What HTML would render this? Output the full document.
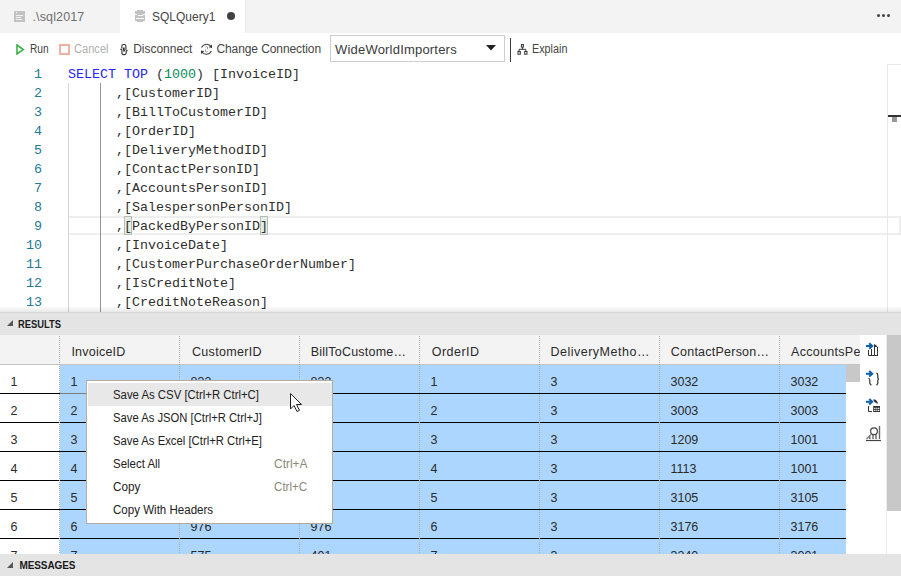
<!DOCTYPE html>
<html><head><meta charset="utf-8"><style>
*{box-sizing:border-box;margin:0;padding:0}
html,body{width:901px;height:579px;overflow:hidden;background:#fff;font-family:"Liberation Sans",sans-serif;color:#333}
.a{position:absolute;white-space:pre}
#tabs{position:absolute;left:0;top:0;width:901px;height:33px;background:#f3f3f3}
#tab2{position:absolute;left:120px;top:0;width:125px;height:33px;background:#fff}
.tt{position:absolute;font-size:12.5px;line-height:16px;white-space:pre}
.tb{position:absolute;font-size:12px;line-height:16px;color:#444;white-space:pre}
#ddl{position:absolute;left:330px;top:35px;width:175px;height:27px;border:1px solid #cecece;background:#fff}
#ed{position:absolute;left:0;top:64px;width:901px;height:248px;overflow:hidden;background:#fff}
.ln{position:absolute;left:0;width:42px;text-align:right;font-family:"Liberation Mono",monospace;font-size:13.333px;line-height:19px;color:#237893}
.cd{position:absolute;left:68px;font-family:"Liberation Mono",monospace;font-size:13.333px;line-height:19px;color:#2e2e2e;white-space:pre}
.kw{color:#2424ff}.nu{color:#09885a}
#res{position:absolute;left:0;top:312px;width:901px;height:23px;background:#e4e4e4;border-top:1px solid #d6d6d6}
.ph{position:absolute;font-weight:bold;font-size:10px;line-height:12px;color:#1a1a1a;white-space:pre}
#grid{position:absolute;left:0;top:335px;width:886px;height:219px;overflow:hidden;background:#fff}
.gh{position:absolute;left:0;top:0;width:860px;height:30px;background:#f3f3f3;border-bottom:1px solid #c5c5c5}
.c{position:absolute;font-size:12.5px;line-height:16px;color:#2a2a2a;white-space:pre}
.row{position:absolute;left:0;width:846px;height:29px;border-bottom:1px solid #000}
.sel{position:absolute;left:60px;width:786px;background:#add6ff}
.vl{position:absolute;top:1px;width:1px;border-left:1px dotted #ababab}
#menu{position:absolute;left:86px;top:380px;width:247px;height:144px;background:#fff;border:1px solid #b3aca6}
.mi{position:absolute;font-size:12.3px;line-height:14px;color:#222;white-space:pre}
.ms{position:absolute;font-size:12.3px;line-height:14px;color:#8a8a78;white-space:pre}
#msg{position:absolute;left:0;top:554px;width:901px;height:22px;background:#e4e4e4}
</style></head><body>
<div id="tabs">
<svg class="a" style="left:14px;top:11px" width="11" height="11" viewBox="0 0 11 11"><rect x="0" y="0" width="11" height="11" fill="#c2c2c2"/><rect x="2" y="1" width="1.2" height="1.2" fill="#f3f3f3"/><rect x="2" y="4" width="7" height="1" fill="#f3f3f3"/><rect x="2" y="6" width="5" height="1" fill="#f3f3f3"/><rect x="2" y="8" width="6" height="1" fill="#f3f3f3"/></svg>
<div id="t1" class="tt" style="left:32.40px;top:9px;letter-spacing:0.150px;color:#6f6f6f">.\sql2017</div>
<div id="tab2">
<svg class="a" style="left:15px;top:10px" width="10" height="12" viewBox="0 0 10 12"><g fill="#c2c2c2"><rect x="2" y="0" width="6" height="1"/><rect x="0" y="1" width="10" height="3"/><rect x="2" y="4" width="6" height="1"/><rect x="0" y="5" width="10" height="6"/><rect x="2" y="11" width="6" height="1"/></g><rect x="3" y="5" width="5" height="1" fill="#fff"/><rect x="1" y="8" width="8" height="1" fill="#fff"/></svg>
<div id="t2" class="tt" style="left:32.40px;top:9px;letter-spacing:0.000px;color:#444;transform:scaleX(0.9593);transform-origin:0 0;">SQLQuery1</div>
<div class="a" style="left:107px;top:12px;width:8px;height:8px;border-radius:50%;background:#424242"></div>
</div>
<div class="a" style="left:245px;top:0;width:1px;height:33px;background:#ebebeb"></div>
<svg class="a" style="left:876px;top:13px" width="15" height="5" viewBox="0 0 15 5"><circle cx="2.5" cy="2.5" r="1.5" fill="#424242"/><circle cx="7.5" cy="2.5" r="1.5" fill="#424242"/><circle cx="12.5" cy="2.5" r="1.5" fill="#424242"/></svg>
</div>
<svg class="a" style="left:16px;top:44px" width="9" height="11" viewBox="0 0 9 11"><path d="M1 1 L7.3 5.5 L1 10 Z" fill="none" stroke="#3bb44a" stroke-width="1.6"/></svg>
<div id="run" class="tb" style="left:29.60px;top:41px;letter-spacing:0.000px;;transform:scaleX(0.8433);transform-origin:0 0;">Run</div>
<div class="a" style="left:59px;top:44px;width:11px;height:11px;border:2px solid #efb1a2"></div>
<div id="cancel" class="tb" style="left:74.40px;top:41px;letter-spacing:0.000px;color:#b0b0b0;transform:scaleX(0.9240);transform-origin:0 0;">Cancel</div>
<svg class="a" style="left:118px;top:42px" width="12" height="15" viewBox="0 0 12 15"><g fill="none" stroke="#333" stroke-width="1.1"><path d="M3.8 6.5 V4.3 Q3.8 2.5 5.5 2.5 H6.3 Q7.9 2.5 7.9 4.3 V8"/><path d="M8.2 8.5 V10.8 Q8.2 12.6 6.5 12.6 H5.6 Q3.9 12.6 3.9 10.8 V7.5"/><path d="M5.6 5.5 L6.2 9.5" stroke-width="1.7"/><path d="M2.3 7.4 H3.8 M8.2 8.6 H9.6"/></g></svg>
<div id="disc" class="tb" style="left:133.20px;top:41px;letter-spacing:-0.022px;">Disconnect</div>
<svg class="a" style="left:199px;top:41px" width="15" height="16" viewBox="0 0 15 16"><g fill="none" stroke="#444" stroke-width="1.1"><path d="M2.5 6.5 Q4.5 3 8 3.2 Q10.5 3.5 12 5.5"/><path d="M12.5 10 Q10.5 13.5 7 13.3 Q4.5 13 3 11"/></g><path d="M13 3.5 L13 7 L9.8 6.2 Z" fill="#333"/><path d="M2 13 L2 9.5 L5.2 10.3 Z" fill="#333"/><g fill="none" stroke="#888" stroke-width="0.9"><path d="M6.5 6 Q7.5 5 8.5 6 V8 M6.5 8.5 V10.5 Q7.5 11.5 8.5 10.5"/></g></svg>
<div id="chg" class="tb" style="left:216.40px;top:41px;letter-spacing:-0.087px;">Change Connection</div>
<div id="ddl"></div>
<div id="wwi" class="tb" style="left:335.00px;top:42px;letter-spacing:0.200px;color:#3a3a3a;font-size:13px">WideWorldImporters</div>
<svg class="a" style="left:486px;top:45px" width="10" height="6" viewBox="0 0 10 6"><path d="M0 0 H10 L5 5.5 Z" fill="#222"/></svg>
<div class="a" style="left:510px;top:38px;width:1px;height:24px;background:#3c3c3c"></div>
<svg class="a" style="left:514px;top:41px" width="16" height="16" viewBox="0 0 16 16"><g fill="none" stroke="#333" stroke-width="1"><rect x="7.4" y="3.5" width="2" height="2.6"/><rect x="4" y="10.5" width="2.3" height="2.7"/><rect x="10.7" y="10.5" width="2.3" height="2.7"/><path d="M8.4 6.1 V8.3 M5.1 10.5 V8.3 H11.8 V10.5"/></g></svg>
<div id="explain" class="tb" style="left:532.40px;top:41px;letter-spacing:0.000px;;transform:scaleX(0.8989);transform-origin:0 0;">Explain</div>
<div id="ed">
<div class="a" style="left:68px;top:152px;width:833px;height:19px;border:2px solid #eeeeee;border-left:0"></div>
<div class="a" style="left:68px;top:19px;width:1px;height:229px;background:#d3d3d3"></div>
<div class="a" style="left:100px;top:19px;width:1px;height:229px;background:#939393"></div>
<div class="a" style="left:124px;top:152px;width:8px;height:19px;background:#e3efe3;border:1px solid #b9b9b9"></div>
<div class="a" style="left:260px;top:152px;width:8px;height:19px;background:#e3efe3;border:1px solid #b9b9b9"></div>
<div class="ln" style="top:1px">1</div><div class="cd" style="top:1px"><span class="kw">SELECT</span> <span class="kw">TOP</span> (<span class="nu">1000</span>) [InvoiceID]</div>
<div class="ln" style="top:20px">2</div><div class="cd" style="top:20px">      ,[CustomerID]</div>
<div class="ln" style="top:39px">3</div><div class="cd" style="top:39px">      ,[BillToCustomerID]</div>
<div class="ln" style="top:58px">4</div><div class="cd" style="top:58px">      ,[OrderID]</div>
<div class="ln" style="top:77px">5</div><div class="cd" style="top:77px">      ,[DeliveryMethodID]</div>
<div class="ln" style="top:96px">6</div><div class="cd" style="top:96px">      ,[ContactPersonID]</div>
<div class="ln" style="top:115px">7</div><div class="cd" style="top:115px">      ,[AccountsPersonID]</div>
<div class="ln" style="top:134px">8</div><div class="cd" style="top:134px">      ,[SalespersonPersonID]</div>
<div class="ln" style="top:153px">9</div><div class="cd" style="top:153px">      ,[PackedByPersonID]</div>
<div class="ln" style="top:172px">10</div><div class="cd" style="top:172px">      ,[InvoiceDate]</div>
<div class="ln" style="top:191px">11</div><div class="cd" style="top:191px">      ,[CustomerPurchaseOrderNumber]</div>
<div class="ln" style="top:210px">12</div><div class="cd" style="top:210px">      ,[IsCreditNote]</div>
<div class="ln" style="top:229px">13</div><div class="cd" style="top:229px">      ,[CreditNoteReason]</div>
<div class="a" style="left:887px;top:0;width:14px;height:248px;border-left:1px solid #e8e8e8;border-top:1px solid #e8e8e8"></div>
<div class="a" style="left:888px;top:51px;width:13px;height:2px;background:#333"></div>
<div class="a" style="left:892px;top:53px;width:5px;height:5px;background:#999"></div>
<div class="a" style="left:0;top:242px;width:901px;height:6px;background:linear-gradient(rgba(0,0,0,0),rgba(0,0,0,0.09))"></div>
</div>
<div id="res"><svg class="a" style="left:7px;top:7px" width="6" height="6" viewBox="0 0 6 6"><path d="M6 0 V6 H0 Z" fill="#555"/></svg><div id="results" class="ph" style="left:18.40px;top:6px;letter-spacing:0.000px;;transform:scaleX(0.9371);transform-origin:0 0;">RESULTS</div></div>
<div id="grid"><div class="gh">
<div id="h0" class="c" style="left:71.40px;top:9px;letter-spacing:0.225px;">InvoiceID</div>
<div id="h1" class="c" style="left:192.00px;top:9px;letter-spacing:0.311px;">CustomerID</div>
<div id="h2" class="c" style="left:310.80px;top:9px;letter-spacing:0.215px;">BillToCustome…</div>
<div id="h3" class="c" style="left:431.80px;top:9px;letter-spacing:0.467px;">OrderID</div>
<div id="h4" class="c" style="left:550.40px;top:9px;letter-spacing:0.508px;">DeliveryMetho…</div>
<div id="h5" class="c" style="left:670.80px;top:9px;letter-spacing:0.231px;">ContactPerson…</div>
<div id="h6" class="c" style="left:791.00px;top:9px;letter-spacing:0.300px;">AccountsPe</div>
</div>
<div class="row" style="top:30px"><div class="sel" style="top:0;height:28px"></div>
<div class="c" style="left:10.5px;top:9px;letter-spacing:0px">1</div>
<div class="c" style="left:70.5px;top:9px;letter-spacing:0px">1</div>
<div class="c" style="left:190.5px;top:9px;letter-spacing:0px">832</div>
<div class="c" style="left:310.5px;top:9px;letter-spacing:0px">832</div>
<div class="c" style="left:430.5px;top:9px;letter-spacing:0px">1</div>
<div class="c" style="left:550.5px;top:9px;letter-spacing:0px">3</div>
<div class="c" style="left:670.5px;top:9px;letter-spacing:0px">3032</div>
<div class="c" style="left:790.5px;top:9px;letter-spacing:0px">3032</div>
</div>
<div class="row" style="top:59px"><div class="sel" style="top:0;height:28px"></div>
<div class="c" style="left:10.5px;top:9px;letter-spacing:0px">2</div>
<div class="c" style="left:70.5px;top:9px;letter-spacing:0px">2</div>
<div class="c" style="left:190.5px;top:9px;letter-spacing:0px">832</div>
<div class="c" style="left:310.5px;top:9px;letter-spacing:0px">832</div>
<div class="c" style="left:430.5px;top:9px;letter-spacing:0px">2</div>
<div class="c" style="left:550.5px;top:9px;letter-spacing:0px">3</div>
<div class="c" style="left:670.5px;top:9px;letter-spacing:0px">3003</div>
<div class="c" style="left:790.5px;top:9px;letter-spacing:0px">3003</div>
</div>
<div class="row" style="top:88px"><div class="sel" style="top:0;height:28px"></div>
<div class="c" style="left:10.5px;top:9px;letter-spacing:0px">3</div>
<div class="c" style="left:70.5px;top:9px;letter-spacing:0px">3</div>
<div class="c" style="left:190.5px;top:9px;letter-spacing:0px">803</div>
<div class="c" style="left:310.5px;top:9px;letter-spacing:0px">803</div>
<div class="c" style="left:430.5px;top:9px;letter-spacing:0px">3</div>
<div class="c" style="left:550.5px;top:9px;letter-spacing:0px">3</div>
<div class="c" style="left:670.5px;top:9px;letter-spacing:0px">1209</div>
<div class="c" style="left:790.5px;top:9px;letter-spacing:0px">1001</div>
</div>
<div class="row" style="top:117px"><div class="sel" style="top:0;height:28px"></div>
<div class="c" style="left:10.5px;top:9px;letter-spacing:0px">4</div>
<div class="c" style="left:70.5px;top:9px;letter-spacing:0px">4</div>
<div class="c" style="left:190.5px;top:9px;letter-spacing:0px">803</div>
<div class="c" style="left:310.5px;top:9px;letter-spacing:0px">803</div>
<div class="c" style="left:430.5px;top:9px;letter-spacing:0px">4</div>
<div class="c" style="left:550.5px;top:9px;letter-spacing:0px">3</div>
<div class="c" style="left:670.5px;top:9px;letter-spacing:0px">1113</div>
<div class="c" style="left:790.5px;top:9px;letter-spacing:0px">1001</div>
</div>
<div class="row" style="top:146px"><div class="sel" style="top:0;height:28px"></div>
<div class="c" style="left:10.5px;top:9px;letter-spacing:0px">5</div>
<div class="c" style="left:70.5px;top:9px;letter-spacing:0px">5</div>
<div class="c" style="left:190.5px;top:9px;letter-spacing:0px">105</div>
<div class="c" style="left:310.5px;top:9px;letter-spacing:0px">105</div>
<div class="c" style="left:430.5px;top:9px;letter-spacing:0px">5</div>
<div class="c" style="left:550.5px;top:9px;letter-spacing:0px">3</div>
<div class="c" style="left:670.5px;top:9px;letter-spacing:0px">3105</div>
<div class="c" style="left:790.5px;top:9px;letter-spacing:0px">3105</div>
</div>
<div class="row" style="top:175px"><div class="sel" style="top:0;height:28px"></div>
<div class="c" style="left:10.5px;top:9px;letter-spacing:0px">6</div>
<div class="c" style="left:70.5px;top:9px;letter-spacing:0px">6</div>
<div class="c" style="left:190.5px;top:9px;letter-spacing:0px">976</div>
<div class="c" style="left:310.5px;top:9px;letter-spacing:0px">976</div>
<div class="c" style="left:430.5px;top:9px;letter-spacing:0px">6</div>
<div class="c" style="left:550.5px;top:9px;letter-spacing:0px">3</div>
<div class="c" style="left:670.5px;top:9px;letter-spacing:0px">3176</div>
<div class="c" style="left:790.5px;top:9px;letter-spacing:0px">3176</div>
</div>
<div class="row" style="top:204px"><div class="sel" style="top:0;height:28px"></div>
<div class="c" style="left:10.5px;top:9px;letter-spacing:0px">7</div>
<div class="c" style="left:70.5px;top:9px;letter-spacing:0px">7</div>
<div class="c" style="left:190.5px;top:9px;letter-spacing:0px">575</div>
<div class="c" style="left:310.5px;top:9px;letter-spacing:0px">401</div>
<div class="c" style="left:430.5px;top:9px;letter-spacing:0px">7</div>
<div class="c" style="left:550.5px;top:9px;letter-spacing:0px">3</div>
<div class="c" style="left:670.5px;top:9px;letter-spacing:0px">3240</div>
<div class="c" style="left:790.5px;top:9px;letter-spacing:0px">3001</div>
</div>
<div class="vl" style="left:59px;height:219px"></div>
<div class="vl" style="left:179px;height:219px"></div>
<div class="vl" style="left:299px;height:219px"></div>
<div class="vl" style="left:419px;height:219px"></div>
<div class="vl" style="left:539px;height:219px"></div>
<div class="vl" style="left:659px;height:219px"></div>
<div class="vl" style="left:779px;height:219px"></div>
<div class="a" style="left:60px;top:58px;width:30px;height:1px;background:#7c7c7c"></div>
<div class="a" style="left:846px;top:30px;width:14px;height:189px;background:#fff"></div>
<div class="a" style="left:846px;top:30px;width:14px;height:17px;background:#c8c8c8"></div>
</div>
<div id="msg"><svg class="a" style="left:7px;top:8px" width="6" height="6" viewBox="0 0 6 6"><path d="M6 0 V6 H0 Z" fill="#555"/></svg><div id="messages" class="ph" style="left:19.40px;top:6px;letter-spacing:-0.086px;">MESSAGES</div></div>
<div class="a" style="left:860px;top:335px;width:26px;height:219px;background:#fff"></div>
<div class="a" style="left:886px;top:335px;width:1px;height:219px;background:#ebebf0"></div>
<div class="a" style="left:887px;top:335px;width:14px;height:176px;background:#c8c8c8"></div>
<svg class="a" style="left:865px;top:342px" width="17" height="100" viewBox="0 0 17 100">
  <g fill="none" stroke="#0b5fb0" stroke-width="2" stroke-linejoin="miter"><path d="M1 4 H7"/><path d="M4.2 1.2 L7.2 4 L4.2 6.8"/><path d="M1 31.8 H7"/><path d="M4.2 29 L7.2 31.8 L4.2 34.6"/><path d="M1 59.8 H7"/><path d="M4.2 57 L7.2 59.8 L4.2 62.6"/></g>
  <g fill="none" stroke="#333" stroke-width="1"><path d="M3.5 8 V13.5 H13 M6.5 13.5 V7 M9.5 13.5 V2.5 L12.5 5 V13.5"/></g><path d="M9.5 2.5 L12.5 5 H9.5 Z" fill="#333"/>
  <path d="M3.3 36.5 Q4.8 36.5 4.8 38.2 V40.6 Q4.8 42.8 6.5 42.8" fill="none" stroke="#333" stroke-width="1.2"/>
  <path d="M11.3 31.2 Q12.8 31.2 12.8 33.2 V35.6 Q12.8 37 14 37 Q12.8 37 12.8 38.5 V40.6 Q12.8 42.8 11.3 42.8" fill="none" stroke="#333" stroke-width="1.2"/>
  <path d="M8.5 58 Q11 58 12.5 61.5" fill="none" stroke="#333" stroke-width="1.3"/><path d="M8.6 58.2 L11.5 59 L10.2 61.2 Z" fill="#333"/>
  <path d="M3.5 64 V69.5 H7" fill="none" stroke="#333" stroke-width="1"/>
  <rect x="8.2" y="64" width="6.8" height="6" fill="#333"/>
  <g fill="#fff"><rect x="9.2" y="65.8" width="1.2" height="1.2"/><rect x="11.2" y="65.8" width="1.2" height="1.2"/><rect x="13.1" y="65.8" width="1.2" height="1.2"/><rect x="9.2" y="67.8" width="1.2" height="1.2"/><rect x="11.2" y="67.8" width="1.2" height="1.2"/><rect x="13.1" y="67.8" width="1.2" height="1.2"/></g>
  <g fill="none" stroke="#444" stroke-width="1.2"><circle cx="9" cy="89.2" r="3.4"/><path d="M1 98.5 H16"/><path d="M1.5 97 L6 92.5" stroke="#777"/></g>
  <g fill="none" stroke="#666" stroke-width="1.4"><path d="M4.8 97 V94.5 M8 97 V93 M11 97 V92.5 M14.5 97 V84"/></g>
</svg>
<div id="menu"><div class="a" style="left:1px;top:2px;width:244px;height:23px;background:#e8e8e8"></div>
<div id="m0" class="mi" style="left:26.00px;top:7px;letter-spacing:0.000px;;transform:scaleX(0.9246);transform-origin:0 0;">Save As CSV [Ctrl+R Ctrl+C]</div>
<div id="m1" class="mi" style="left:26.00px;top:30px;letter-spacing:0.000px;;transform:scaleX(0.9147);transform-origin:0 0;">Save As JSON [Ctrl+R Ctrl+J]</div>
<div id="m2" class="mi" style="left:26.00px;top:53px;letter-spacing:0.000px;;transform:scaleX(0.9198);transform-origin:0 0;">Save As Excel [Ctrl+R Ctrl+E]</div>
<div id="m3" class="mi" style="left:26.00px;top:76px;letter-spacing:0.000px;;transform:scaleX(0.9320);transform-origin:0 0;">Select All</div>
<div id="m4" class="mi" style="left:26.00px;top:99px;letter-spacing:0.000px;;transform:scaleX(0.9501);transform-origin:0 0;">Copy</div>
<div id="m5" class="mi" style="left:26.00px;top:122px;letter-spacing:0.000px;;transform:scaleX(0.9390);transform-origin:0 0;">Copy With Headers</div>
<div id="s3" class="ms" style="left:187.20px;top:76px;letter-spacing:0.000px;;transform:scaleX(0.9724);transform-origin:0 0;">Ctrl+A</div>
<div id="s4" class="ms" style="left:187.20px;top:99px;letter-spacing:0.000px;;transform:scaleX(0.9439);transform-origin:0 0;">Ctrl+C</div>
</div>
<svg class="a" style="left:289px;top:392px" width="14" height="21" viewBox="0 0 14 21"><path d="M1.5 1.5 V17 L5 13.5 L8 19.5 L10.5 18.3 L7.5 12.5 H12.5 Z" fill="#fff" stroke="#222" stroke-width="1"/></svg>
</body></html>
